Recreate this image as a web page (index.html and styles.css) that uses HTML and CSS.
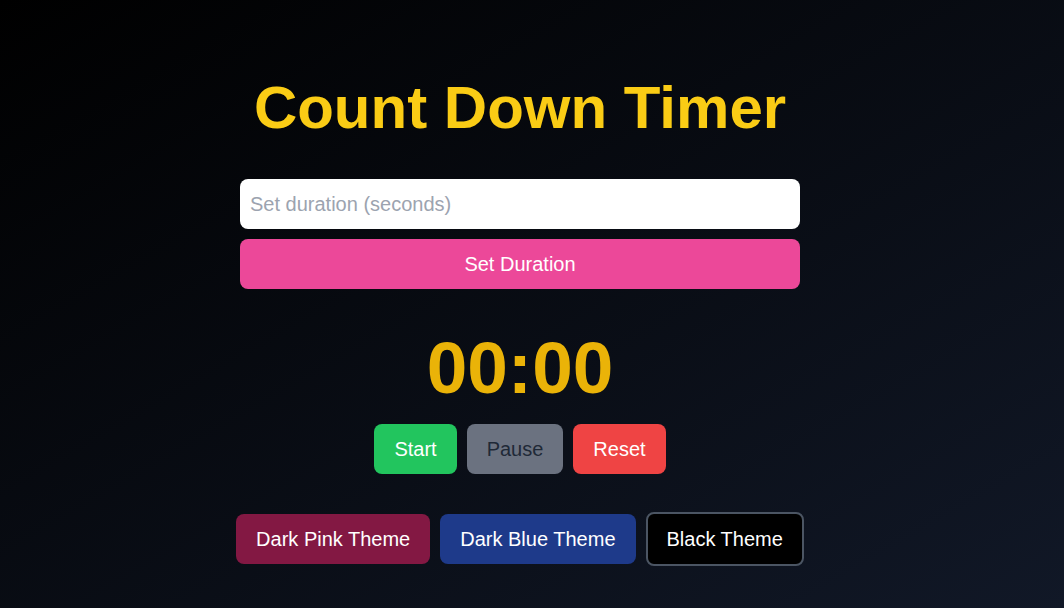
FILE: index.html
```html
<!DOCTYPE html>
<html lang="en">
<head>
<meta charset="utf-8">
<title>Count Down Timer</title>
<link rel="stylesheet" href="styles.css">
</head>
<body>
<div class="app">
  <h1 class="title">Count Down Timer</h1>
  <div class="form">
    <input class="duration" type="text" placeholder="Set duration (seconds)">
    <button class="btn btn-set">Set Duration</button>
  </div>
  <div class="time">00:00</div>
  <div class="controls">
    <button class="btn btn-start">Start</button>
    <button class="btn btn-pause">Pause</button>
    <button class="btn btn-reset">Reset</button>
  </div>
  <div class="themes">
    <button class="btn btn-pink">Dark Pink Theme</button>
    <button class="btn btn-blue">Dark Blue Theme</button>
    <button class="btn btn-black">Black Theme</button>
  </div>
</div>
</body>
</html>
```
FILE: styles.css
```css
html, body {
  margin: 0;
  padding: 0;
}
body {
  min-height: 100vh;
  background: linear-gradient(to bottom right, #000000, #111827);
  font-family: "Liberation Sans", Arial, sans-serif;
  color: #fff;
}
.app {
  display: flex;
  flex-direction: column;
  align-items: center;
  padding: 78px 24px 0 0;
}
.title {
  margin: 0;
  font-size: 60px;
  line-height: 60px;
  font-weight: 700;
  color: #facc15;
}
.form {
  margin-top: 41px;
  width: 560px;
  display: flex;
  flex-direction: column;
  gap: 10px;
}
.duration {
  box-sizing: border-box;
  height: 50px;
  width: 100%;
  border: none;
  border-radius: 8px;
  padding: 0 10px;
  font-family: inherit;
  font-size: 20px;
  color: #111827;
  background: #fff;
  outline: none;
}
.duration::placeholder {
  color: #9ca3af;
}
.btn {
  box-sizing: border-box;
  height: 50px;
  padding: 0 20px;
  border: none;
  border-radius: 8px;
  font-family: inherit;
  font-size: 20px;
  color: #fff;
  cursor: pointer;
}
.btn-set {
  width: 100%;
  background: #ec4899;
}
.time {
  margin-top: 43px;
  font-size: 73px;
  line-height: 72px;
  font-weight: 700;
  color: #eab308;
}
.controls {
  margin-top: 20px;
  display: flex;
  gap: 10px;
}
.btn-start { background: #22c55e; }
.btn-pause { background: #6b7280; color: #1f2937; }
.btn-reset { background: #ef4444; }
.themes {
  margin-top: 38px;
  display: flex;
  align-items: center;
  gap: 10px;
}
.btn-pink { background: #831843; }
.btn-blue { background: #1e3a8a; }
.btn-black {
  height: 54px;
  padding: 0 19px;
  background: #000;
  border: 2px solid #4b5563;
}
```
